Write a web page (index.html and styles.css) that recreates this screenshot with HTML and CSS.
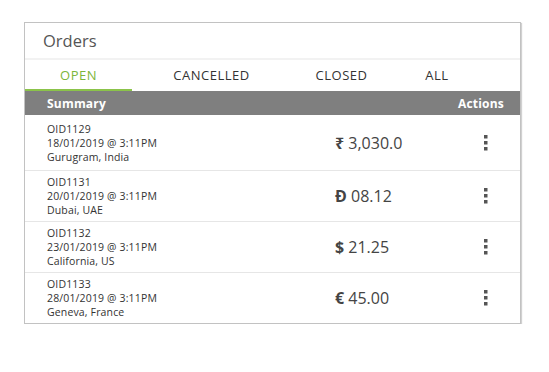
FILE: index.html
```html
<!DOCTYPE html>
<html>
<head>
<meta charset="utf-8">
<link rel="stylesheet" href="styles.css">
</head>
<body>
<div class="card">
  <div class="title">Orders</div>
  <div class="tabs">
    <div class="tab active">OPEN</div>
    <div class="tab">CANCELLED</div>
    <div class="tab">CLOSED</div>
    <div class="tab">ALL</div>
  </div>
  <div class="thead">
    <span>Summary</span>
    <span>Actions</span>
  </div>
  <div class="row first">
    <div class="info"><div>OID1129</div><div>18/01/2019 @ 3:11PM</div><div>Gurugram, India</div></div>
    <div class="amount"><b>₹</b> 3,030.0</div>
    <div class="act"><svg width="4" height="16" viewBox="0 0 4 16"><rect x="0" y="0" width="3.5" height="3.5"/><rect x="0" y="6" width="3.5" height="3.5"/><rect x="0" y="12" width="3.5" height="3.5"/></svg></div>
  </div>
  <div class="row">
    <div class="info"><div>OID1131</div><div>20/01/2019 @ 3:11PM</div><div>Dubai, UAE</div></div>
    <div class="amount"><b>Đ</b> 08.12</div>
    <div class="act"><svg width="4" height="16" viewBox="0 0 4 16"><rect x="0" y="0" width="3.5" height="3.5"/><rect x="0" y="6" width="3.5" height="3.5"/><rect x="0" y="12" width="3.5" height="3.5"/></svg></div>
  </div>
  <div class="row">
    <div class="info"><div>OID1132</div><div>23/01/2019 @ 3:11PM</div><div>California, US</div></div>
    <div class="amount"><b>$</b> 21.25</div>
    <div class="act"><svg width="4" height="16" viewBox="0 0 4 16"><rect x="0" y="0" width="3.5" height="3.5"/><rect x="0" y="6" width="3.5" height="3.5"/><rect x="0" y="12" width="3.5" height="3.5"/></svg></div>
  </div>
  <div class="row last">
    <div class="info"><div>OID1133</div><div>28/01/2019 @ 3:11PM</div><div>Geneva, France</div></div>
    <div class="amount"><b>€</b> 45.00</div>
    <div class="act"><svg width="4" height="16" viewBox="0 0 4 16"><rect x="0" y="0" width="3.5" height="3.5"/><rect x="0" y="6" width="3.5" height="3.5"/><rect x="0" y="12" width="3.5" height="3.5"/></svg></div>
  </div>
</div>
</body>
</html>
```
FILE: styles.css
```css
html, body {
  margin: 0;
  padding: 0;
  background: #fff;
}
body {
  font-family: "Open Sans", "Noto Sans", sans-serif;
  color: #333;
}
.card {
  margin: 22px 0 0 24px;
  width: 495px;
  border: 1px solid #c2c2c2;
  box-shadow: 1px 1px 1px rgba(0,0,0,0.18);
  box-sizing: content-box;
}
.title {
  height: 35px;
  padding-left: 18px;
  display: flex;
  align-items: center;
  font-size: 16.5px;
  color: #555;
  border-bottom: 2px solid #f2f2f2;
}
.tabs {
  display: grid;
  grid-template-columns: 107px 159px 101px 90px;
  height: 31px;
}
.tab {
  display: flex;
  align-items: center;
  justify-content: center;
  font-size: 13px;
  letter-spacing: 0.5px;
  color: #333;
  border-bottom: 2px solid transparent;
  padding-top: 1px;
  box-sizing: border-box;
}
.tab.active {
  color: #7cb63a;
  border-bottom-color: #8bc34a;
}
.thead {
  background: #7f7f7f;
  color: #fff;
  font-weight: 700;
  font-size: 12px;
  letter-spacing: 0.2px;
  height: 24px;
  display: flex;
  align-items: center;
  justify-content: space-between;
  padding: 0 16px 0 22px;
}
.row {
  display: flex;
  align-items: center;
  height: 50px;
  border-bottom: 1px solid #e6e6e6;
  padding-left: 22px;
}
.row.first {
  height: 55px;
}
.row.last {
  border-bottom: none;
  height: 50px;
}
.info {
  font-size: 10.5px;
  line-height: 14px;
  color: #333;
  width: 288px;
}
.info div {
  letter-spacing: 0.15px;
}
.amount {
  font-size: 16px;
  color: #444;
  width: 149px;
}
.amount b {
  font-weight: 700;
}
.act svg {
  display: block;
  fill: #555;
}
```
